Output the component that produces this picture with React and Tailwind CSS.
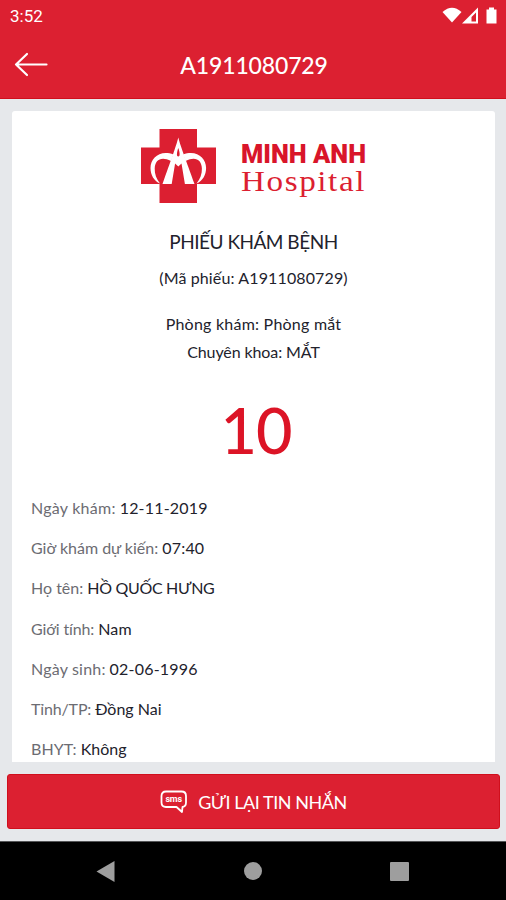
import React from 'react';

const details = [
  { label: "Ngày khám:", value: "12-11-2019", labelClass: "tracking-[0.25px]", valueClass: "tracking-[0.2px]" },
  { label: "Giờ khám dự kiến:", value: "07:40", labelClass: "tracking-[0px]", valueClass: "tracking-[0.2px]" },
  { label: "Họ tên:", value: "HỒ QUỐC HƯNG", labelClass: "tracking-[0px]", valueClass: "tracking-[-0.3px]" },
  { label: "Giới tính:", value: "Nam", labelClass: "tracking-[-0.15px]", valueClass: "tracking-[0.2px]" },
  { label: "Ngày sinh:", value: "02-06-1996", labelClass: "tracking-[0.2px]", valueClass: "tracking-[0.2px]" },
  { label: "Tỉnh/TP:", value: "Đồng Nai", labelClass: "tracking-[-0.15px]", valueClass: "tracking-[0px]" },
  { label: "BHYT:", value: "Không", labelClass: "tracking-[0.1px]", valueClass: "tracking-[0px]" },
];

function StatusBar() {
  return (
    <div className="flex h-8 items-center justify-between pl-[10px] pr-2 text-white">
      <span className="font-['Roboto',sans-serif] text-[17px] leading-none">3:52</span>
      <svg width="56" height="18" viewBox="0 0 56 18" fill="#fff">
        <path d="M0.500 5 Q10 -3.500 19.500 5 L10 15.500 Z" />
        <path fillRule="evenodd" d="M20 16.500 L36 0.500 V16.500 Z M29.500 10 V14.500 H34 V5.500 Z" />
        <path d="M44.500 2.500 H47 V0.500 H52 V2.500 H54.500 V16.500 H44.500 Z" />
      </svg>
    </div>
  );
}

function Header() {
  return (
    <div className="relative flex h-[67px] items-center justify-center pl-[2px] text-white">
      <svg className="absolute left-[14px] top-5" width="34" height="26" viewBox="0 0 34 26" fill="none" stroke="#fff" strokeWidth="2.200" strokeLinecap="round" strokeLinejoin="round">
        <path d="M32.500 12.500 H2 M13 2 L2 12.500 L13 23" />
      </svg>
      <h1 className="text-[23px] font-medium leading-none tracking-[-0.15px]">A1911080729</h1>
    </div>
  );
}

function Logo() {
  return (
    <svg className="block overflow-visible" width="228" height="76" viewBox="0 0 228 76">
      <path fill="#dc1f31" d="M18.500 0 H56 V18.500 H75 V55 H56 V74 H18.500 V55 H0 V18.500 H18.500 Z" />
      <g fill="#fff">
        <path fillRule="evenodd" d="M37.300 8.500 C40 19 45 31 53.500 55 H43.900 L40.500 34.500 L37.300 37.500 L34.100 34.500 L30.700 55 H21.500 C30 31 34.600 19 37.300 8.500 Z M37.300 19 C35.500 24 35.500 27.500 37.300 27.500 C39.100 27.500 39.100 24 37.300 19 Z" />
        <path d="M32.500 25.500 C19 20.500 9.500 29 9.500 39 C9.500 46 13 52 19 54.500 C15.500 50 13.500 45 13.700 39.500 C14 31 20 27 30 32 Z" />
        <path d="M42.100 25.500 C55.600 20.500 65.100 29 65.100 39 C65.100 46 61.600 52 55.600 54.500 C59.100 50 61.100 45 60.900 39.500 C60.600 31 54.600 27 44.600 32 Z" />
      </g>
      <text x="100" y="33.500" fontFamily="Roboto, sans-serif" fontWeight="900" fontSize="25.500" textLength="125" lengthAdjust="spacingAndGlyphs" fill="#d9152a">MINH ANH</text>
      <text x="100" y="61.500" fontFamily="'Liberation Serif', serif" fontSize="29.500" letterSpacing="1.400" textLength="125" lengthAdjust="spacingAndGlyphs" fill="#dc1f31">Hospital</text>
    </svg>
  );
}

function SmsIcon() {
  return (
    <svg width="28" height="24" viewBox="0 0 28 24" fill="none" stroke="#fff" strokeWidth="1.800" strokeLinejoin="round">
      <path d="M6 1.500 H21.500 Q26 1.500 26 6 V12.500 Q26 16.500 22.500 17 L22 22 L16.500 17 H6 Q1.500 17 1.500 12.500 V6 Q1.500 1.500 6 1.500 Z" />
      <text x="5.500" y="12" fill="#fff" stroke="none" fontFamily="Roboto, sans-serif" fontWeight="700" fontSize="9" textLength="16.500">sms</text>
    </svg>
  );
}

function NavBar() {
  return (
    <div className="flex h-[59px] items-center justify-between border-t border-[#555658] bg-black pl-[96px] pr-[97px]">
      <svg width="19" height="21" viewBox="0 0 19 21"><path fill="#9e9e9e" d="M0.500 10.500 L18.500 0 V21 Z" /></svg>
      <div className="h-[18px] w-[18px] rounded-full bg-[#9e9e9e]"></div>
      <div className="h-[19px] w-[19px] rounded-[1px] bg-[#9e9e9e]"></div>
    </div>
  );
}

function App() {
  return (
    <div className="flex h-[900px] w-[506px] flex-col overflow-hidden bg-[#e6e8eb] font-['Lato',sans-serif] text-[#22222c]">
      <div className="h-[99px] shrink-0 border-b border-[#d00f1c] bg-[#dc2031]">
        <StatusBar />
        <Header />
      </div>

      <div className="ml-3 mr-[11px] mt-3 flex h-[651px] shrink-0 flex-col overflow-hidden rounded-t-[3px] bg-white">
        <div className="flex flex-col items-center">
          <div className="mt-[18px] ml-[3px]"><Logo /></div>
          <h2 className="mt-[25px] text-[19px] leading-6 tracking-[-0.5px]">PHIẾU KHÁM BỆNH</h2>
          <p className="mt-3 text-base leading-6 tracking-[0.13px]">(Mã phiếu: A1911080729)</p>
          <p className="mt-[22px] text-base leading-6 tracking-[0.23px]">Phòng khám: Phòng mắt</p>
          <p className="mt-1 text-base leading-6 tracking-[-0.1px]">Chuyên khoa: MẮT</p>
          <div className="mt-[34px] ml-[5px] text-[63px] font-medium leading-[64px] tracking-[-1px] text-[#dc1426]">10</div>
        </div>
        <div className="mt-[25.5px] pl-[19px]">
          {details.map((item) => (
            <div key={item.label} className="flex h-[40.3px] items-center gap-1 whitespace-nowrap text-base">
              <span className={"text-[#6c6c72] " + item.labelClass}>{item.label}</span>
              <span className={item.valueClass}>{item.value}</span>
            </div>
          ))}
        </div>
      </div>

      <button className="ml-[7px] mr-[6px] mt-3 flex h-[55px] shrink-0 items-center justify-center gap-[10px] rounded-[3px] border border-[#d00f1c] bg-[#dc2031] text-white">
        <SmsIcon />
        <span className="text-lg leading-none tracking-[-0.45px]">GỬI LẠI TIN NHẮN</span>
      </button>

      <div className="mt-auto">
        <NavBar />
      </div>
    </div>
  );
}

export default App;
